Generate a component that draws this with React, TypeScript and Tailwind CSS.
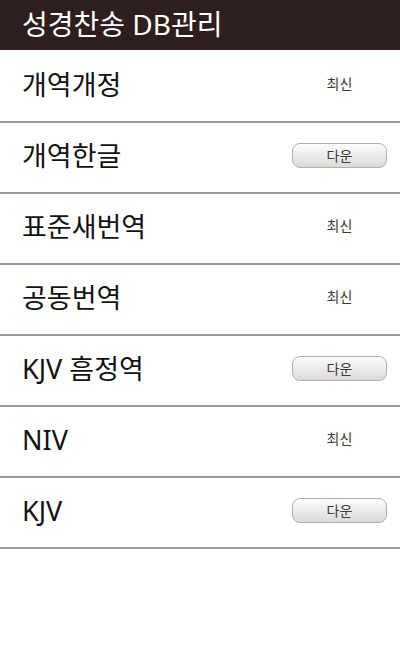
import React from "react";

const rows: { name: string; kind: "latest" | "down" }[] = [
  { name: "개역개정", kind: "latest" },
  { name: "개역한글", kind: "down" },
  { name: "표준새번역", kind: "latest" },
  { name: "공동번역", kind: "latest" },
  { name: "KJV 흠정역", kind: "down" },
  { name: "NIV", kind: "latest" },
  { name: "KJV", kind: "down" },
];

export default function App() {
  return (
    <div
      className="w-[400px] h-[656px] bg-white overflow-hidden"
      style={{ fontFamily: '"Noto Sans", "Noto Sans CJK KR", sans-serif' }}
    >
      <div className="h-[50px] bg-[#2e1f1e] flex items-center pl-[22px] pb-[2px]">
        <span className="text-white text-[28px] leading-none">성경찬송 DB관리</span>
      </div>
      <div className="pt-[2px]">
        {rows.map((r) => (
          <div
            key={r.name}
            className="h-[71px] flex items-center justify-between pl-[22px] pr-[13px] pb-[4px] border-b-2 border-[#9a9a9a]"
          >
            <span className="text-[#111] text-[27px] leading-none">{r.name}</span>
            {r.kind === "latest" ? (
              <div className="w-[95px] flex justify-center pb-[2px]">
                <span className="text-[14px] text-[#3a3a3a] leading-none">최신</span>
              </div>
            ) : (
              <div className="w-[95px] h-[25px] rounded-[8px] border border-[#b0b0b0] bg-gradient-to-b from-[#fdfdfd] to-[#dadada] flex items-center justify-center">
                <span className="text-[14px] text-[#3a3a3a] leading-none">다운</span>
              </div>
            )}
          </div>
        ))}
      </div>
    </div>
  );
}
